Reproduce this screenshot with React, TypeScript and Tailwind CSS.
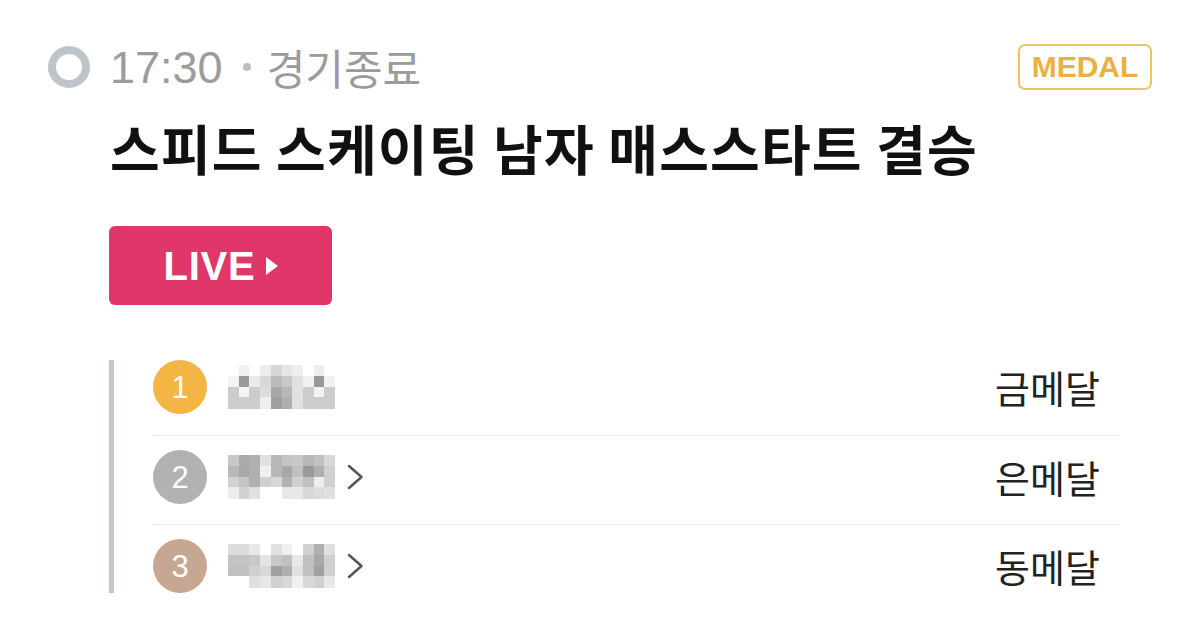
import React from "react";

const KR = { fontFamily: '"Noto Sans CJK KR", "Noto Sans", sans-serif' };
const LAT = { fontFamily: '"Liberation Sans", "Noto Sans CJK KR", sans-serif' };

const mosaics: string[][][] = [
  [
    ["#fff", "#f0f0f0", "#fff", "#ededed", "#d6d6d6", "#e6e6e6", "#eeeeee", "#fff", "#eeeeee", "#fff"],
    ["#f2f2f2", "#999999", "#eaeaea", "#d8d8d8", "#bbbbbb", "#c8c8c8", "#e0e0e0", "#f0f0f0", "#999999", "#f2f2f2"],
    ["#cccccc", "#f4f4f4", "#cccccc", "#dddddd", "#a8a8a8", "#b8b8b8", "#e2e2e2", "#cccccc", "#f4f4f4", "#cccccc"],
    ["#cccccc", "#cccccc", "#cccccc", "#efefef", "#a0a0a0", "#b0b0b0", "#e0e0e0", "#cccccc", "#cccccc", "#cccccc"],
  ],
  [
    ["#c8c8c8", "#aaaaaa", "#b0b0b0", "#e0e0e0", "#b8b8b8", "#c4c4c4", "#c8c8c8", "#b8b8b8", "#c0c0c0", "#d8d8d8"],
    ["#b8b8b8", "#a8a8a8", "#b0b0b0", "#f0f0f0", "#b8b8b8", "#a8a8a8", "#c0c0c0", "#999999", "#b0b0b0", "#d0d0d0"],
    ["#d0d0d0", "#c4c4c4", "#b0b0b0", "#d0d0d0", "#d8d8d8", "#b0b0b0", "#d0d0d0", "#c0c0c0", "#eeeeee", "#d0d0d0"],
    ["#eeeeee", "#d0d0d0", "#e0e0e0", "#fff", "#fff", "#e8e8e8", "#e8e8e8", "#d8d8d8", "#dddddd", "#e0e0e0"],
  ],
  [
    ["#dddddd", "#dddddd", "#e8e8e8", "#fff", "#e0e0e0", "#f0f0f0", "#fff", "#d0d0d0", "#b0b0b0", "#e0e0e0"],
    ["#c4c4c4", "#c4c4c4", "#c8c8c8", "#e4e4e4", "#c8c8c8", "#c0c0c0", "#e8e8e8", "#c0c0c0", "#a8a8a8", "#d0d0d0"],
    ["#c0c0c0", "#c0c0c0", "#d0d0d0", "#d8d8d8", "#a0a0a0", "#b0b0b0", "#e0e0e0", "#c0c0c0", "#a0a0a0", "#d0d0d0"],
    ["#fff", "#fff", "#e0e0e0", "#e8e8e8", "#d0d0d0", "#d8d8d8", "#f0f0f0", "#d8d8d8", "#d0d0d0", "#e8e8e8"],
  ],
];

function Mosaic({ cells }: { cells: string[][] }) {
  const w = 10.7;
  const h = 10.8;
  return (
    <svg width="107" height="44" viewBox="0 0 107 44" shapeRendering="crispEdges">
      {cells.map((row, r) =>
        row.map((c, i) => (
          <rect key={`${r}-${i}`} x={i * w} y={r * h} width={w + 0.3} height={h + 0.3} fill={c} />
        ))
      )}
    </svg>
  );
}

function Chevron() {
  return (
    <svg width="20" height="26" viewBox="0 0 20 26" fill="none">
      <path d="M4 2 L16.5 13 L4 24" stroke="#555555" strokeWidth="2.5" strokeLinecap="round" strokeLinejoin="round" />
    </svg>
  );
}

const rows = [
  { n: "1", bg: "bg-[#f3b544]", medal: "금메달", chevron: false, pad: "pt-0 pb-[21px]" },
  { n: "2", bg: "bg-[#b2b2b2]", medal: "은메달", chevron: true, pad: "pt-[14px] pb-[20px]" },
  { n: "3", bg: "bg-[#c6a792]", medal: "동메달", chevron: true, pad: "pt-[14px] pb-0" },
];

export default function App() {
  return (
    <div className="w-[1200px] h-[630px] bg-white overflow-hidden pt-[44px] pl-[48px] pr-[48px]">
      <div className="flex items-center justify-between h-[46px]">
        <div className="flex items-center">
          <div className="w-[42px] h-[42px] rounded-full border-[8px] border-[#bfc4ca]" />
          <span className="ml-[20px] text-[45px] leading-none text-[#9b9b9b]" style={LAT}>
            17:30
          </span>
          <span className="ml-[20px] w-[8px] h-[8px] rounded-full bg-[#bdbdbd]" />
          <span className="ml-[16px] text-[42px] leading-none text-[#9b9b9b]" style={KR}>
            경기종료
          </span>
        </div>
        <div className="w-[134px] h-[46px] rounded-[7px] border-[2.5px] border-[#f2c35a] flex items-center justify-center">
          <span className="text-[30px] font-bold leading-none text-[#eab042]" style={LAT}>
            MEDAL
          </span>
        </div>
      </div>

      <div className="ml-[62px] mt-[28px] text-[54px] font-bold leading-[60px] text-[#111111] tracking-[1.2px] whitespace-nowrap" style={KR}>
        스피드 스케이팅 남자 매스스타트 결승
      </div>

      <div className="ml-[61px] mt-[48px] w-[223px] h-[79px] rounded-[6px] bg-[#e1366a] flex items-center justify-center">
        <span className="text-[40px] font-bold leading-none text-white tracking-[0.8px]" style={LAT}>
          LIVE
        </span>
        <svg className="ml-[10px]" width="12" height="18" viewBox="0 0 12 18">
          <path d="M0 0 L12 9 L0 18 Z" fill="#ffffff" />
        </svg>
      </div>

      <div className="ml-[61px] mt-[55px] w-[1011px] border-l-[5px] border-[#c3c6cc] pl-[39px]">
        {rows.map((r, idx) => (
          <div
            key={r.n}
            className={`flex items-center pr-[20px] ${r.pad} ${idx < 2 ? "border-b border-[#efefef]" : ""}`}
          >
            <div className={`w-[54px] h-[54px] rounded-full ${r.bg} flex items-center justify-center`}>
              <span className="text-[31px] font-light leading-none text-white" style={LAT}>
                {r.n}
              </span>
            </div>
            <div className="ml-[21px] flex items-center">
              <Mosaic cells={mosaics[idx]} />
              {r.chevron && (
                <div className="ml-[10px]">
                  <Chevron />
                </div>
              )}
            </div>
            <div className="ml-auto text-[38px] leading-none text-[#222222]" style={KR}>
              {r.medal}
            </div>
          </div>
        ))}
      </div>
    </div>
  );
}
